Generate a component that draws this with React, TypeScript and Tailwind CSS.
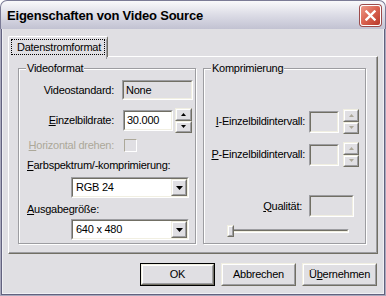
import React from "react";

type Box = { className?: string; inner?: string; children?: React.ReactNode };

// classic 3D edges
const Sunken: React.FC<Box> = ({ className = "", inner = "", children }) => (
  <div className={`border border-t-[#9d9da1] border-l-[#9d9da1] border-r-white border-b-white ${className}`}>
    <div className={`h-full border border-t-[#716f64] border-l-[#716f64] border-r-[#f1efe2] border-b-[#f1efe2] ${inner}`}>
      {children}
    </div>
  </div>
);

const Raised: React.FC<Box> = ({ className = "", inner = "", children }) => (
  <div className={`border border-t-[#f1efe2] border-l-[#f1efe2] border-r-[#716f64] border-b-[#716f64] bg-[#e0dfe3] ${className}`}>
    <div className={`h-full border border-t-white border-l-white border-r-[#9d9da1] border-b-[#9d9da1] flex items-center justify-center ${inner}`}>
      {children}
    </div>
  </div>
);

const Arrow: React.FC<{ up?: boolean; big?: boolean; color?: string }> = ({ up, big, color = "#000" }) =>
  big ? (
    <svg width="7" height="4" viewBox="0 0 7 4">
      <path d="M0 0h7L3.5 4z" fill={color} />
    </svg>
  ) : (
    <svg width="5" height="3" viewBox="0 0 5 3">
      <path d={up ? "M0 3h5L2.5 0z" : "M0 0h5L2.5 3z"} fill={color} />
    </svg>
  );

const Spin: React.FC<{ disabled?: boolean; className?: string }> = ({ disabled, className = "" }) => (
  <div className={`flex flex-col ${className}`}>
    <Raised className="flex-1">
      <Arrow up color={disabled ? "#aca899" : "#000"} />
    </Raised>
    <Raised className="flex-1">
      <Arrow color={disabled ? "#aca899" : "#000"} />
    </Raised>
  </div>
);

const Combo: React.FC<{ value: string }> = ({ value }) => (
  <Sunken className="ml-[44px] w-[118px] h-[21px]" inner="bg-white flex items-center justify-between pl-[3px]">
    <span>{value}</span>
    <Raised className="w-[16px] h-full">
      <Arrow big />
    </Raised>
  </Sunken>
);

const Group: React.FC<{ title: string; className: string; children?: React.ReactNode }> = ({ title, className, children }) => (
  <div className="relative pt-[6px]">
    <div className={`border border-[#9d9da1] shadow-[inset_1px_1px_0_#fff,1px_1px_0_#fff] ${className}`}>{children}</div>
    <span className="absolute left-[8px] top-0 bg-[#e0dfe3] px-[1px] leading-[13px]">{title}</span>
  </div>
);

const Label: React.FC<{ className: string; children?: React.ReactNode }> = ({ className, children }) => (
  <div className={`flex justify-end shrink-0 ${className}`}>
    <span className="whitespace-nowrap">{children}</span>
  </div>
);

const Btn: React.FC<{ def?: boolean; children?: React.ReactNode }> = ({ def, children }) => (
  <div className={`w-[75px] h-[23px] ${def ? "border border-black" : ""}`}>
    <Raised className="h-full">
      <span>{children}</span>
    </Raised>
  </div>
);

export default function App() {
  return (
    <div className="w-[386px] h-[296px] flex flex-col bg-white font-['Liberation_Sans',Arial,sans-serif] text-[11px] leading-[13px] tracking-[-0.25px] text-black">
      {/* title bar */}
      <div className="h-[29px] shrink-0 flex items-center justify-between pl-[6px] pr-[4px] rounded-t-[7px] border border-b-0 border-[#7b7b96] bg-linear-to-b from-[#f9f9fb] via-[#dcdce6] to-[#c2c2d2]">
        <span className="text-[13px] font-bold tracking-[-0.2px]">Eigenschaften von Video Source</span>
        <div className="w-[21px] h-[21px] rounded-[3px] border border-white bg-linear-to-br from-[#ec9a8a] via-[#d9614f] to-[#b8372a] shadow-[0_0_0_1px_#9c4b4b] flex items-center justify-center">
          <svg width="11" height="11" viewBox="0 0 11 11">
            <path d="M1.5 1.5l8 8M9.5 1.5l-8 8" stroke="#fff" strokeWidth="2.4" strokeLinecap="square" />
          </svg>
        </div>
      </div>

      {/* frame */}
      <div className="flex-1 flex flex-col border-x border-b border-[#a9a9bd]">
        <div className="flex-1 flex flex-col border-x border-b border-[#62627f]">
          <div className="flex-1 flex flex-col border-x border-b border-[#f0f0f4] bg-[#e0dfe3] pl-[5px] pt-[7px]">
            {/* tab */}
            <div className="relative z-10 -mb-[1px] w-[100px] h-[21px] rounded-t-[2px] border-t border-l border-white border-r border-r-[#716f64] bg-[#e0dfe3]">
              <div className="h-full border-r border-[#9d9da1]">
                <div className="mt-[2px] ml-[2px] w-[94px] h-[16px] border border-dotted border-black flex items-center pl-[5px]">
                  Datenstromformat
                </div>
              </div>
            </div>

            {/* panel */}
            <div className="w-[370px] h-[198px] border border-t-white border-l-white border-r-[#716f64] border-b-[#716f64]">
              <div className="h-full border-r border-b border-[#9d9da1] flex gap-[7px] pl-[9px] pt-[5px]">
                <Group title="Videoformat" className="w-[178px] h-[176px]">
                  <div className="flex flex-col pl-[8px] pt-[11px]">
                    <div className="flex items-center h-[20px]">
                      <Label className="w-[87px]">Videostandard:</Label>
                      <Sunken className="ml-[8px] w-[71px] h-[20px]" inner="flex items-center pl-[2px]">
                        None
                      </Sunken>
                    </div>
                    <div className="flex items-center h-[25px] mt-[8px]">
                      <Label className="w-[87px]">
                        <u>E</u>inzelbildrate:
                      </Label>
                      <Sunken className="ml-[9px] w-[50px] h-[21px]" inner="bg-white flex items-center pl-[2px]">
                        30.000
                      </Sunken>
                      <Spin className="ml-[2px] w-[17px] h-[25px]" />
                    </div>
                    <div className="flex items-center h-[16px] mt-[4px]">
                      <Label className="w-[87px] text-[#aca899]">
                        <u>H</u>orizontal drehen:
                      </Label>
                      <div className="ml-[10px] w-[13px] h-[13px] border border-t-[#aca899] border-l-[#aca899] border-r-white border-b-white" />
                    </div>
                    <div className="h-[14px] mt-[5px] flex items-center">
                      <span>
                        <u>F</u>arbspektrum/-komprimierung:
                      </span>
                    </div>
                    <div className="mt-[5px]">
                      <Combo value="RGB 24" />
                    </div>
                    <div className="h-[14px] mt-[4px] flex items-center">
                      <span>
                        <u>A</u>usgabegröße:
                      </span>
                    </div>
                    <div className="mt-[3px]">
                      <Combo value="640 x 480" />
                    </div>
                  </div>
                </Group>

                <Group title="Komprimierung" className="w-[163px] h-[176px]">
                  <div className="flex flex-col pt-[40px]">
                    <div className="flex items-center h-[25px]">
                      <Label className="w-[101px]">
                        <u>I</u>-Einzelbildintervall:
                      </Label>
                      <Sunken className="ml-[4px] w-[30px] h-[22px]" />
                      <Spin disabled className="ml-[4px] w-[16px] h-[25px]" />
                    </div>
                    <div className="flex items-center h-[25px] mt-[8px]">
                      <Label className="w-[101px]">
                        <u>P</u>-Einzelbildintervall:
                      </Label>
                      <Sunken className="ml-[4px] w-[30px] h-[22px]" />
                      <Spin disabled className="ml-[4px] w-[16px] h-[25px]" />
                    </div>
                    <div className="flex items-center h-[22px] mt-[28px]">
                      <Label className="w-[98px]">
                        <u>Q</u>ualität:
                      </Label>
                      <Sunken className="ml-[7px] w-[45px] h-[22px]" />
                    </div>
                    <div className="relative ml-[23px] mt-[8px] w-[122px] h-[12px]">
                      <Sunken className="absolute left-[1px] right-0 top-[4px] h-[4px]" />
                      <Raised className="absolute left-0 top-0 w-[7px] h-[12px]" />
                    </div>
                  </div>
                </Group>
              </div>
            </div>

            {/* buttons */}
            <div className="flex gap-[6px] mt-[9px] pl-[132px]">
              <Btn def>OK</Btn>
              <Btn>Abbrechen</Btn>
              <Btn>
                Ü<u>b</u>ernehmen
              </Btn>
            </div>
          </div>
        </div>
      </div>
    </div>
  );
}
